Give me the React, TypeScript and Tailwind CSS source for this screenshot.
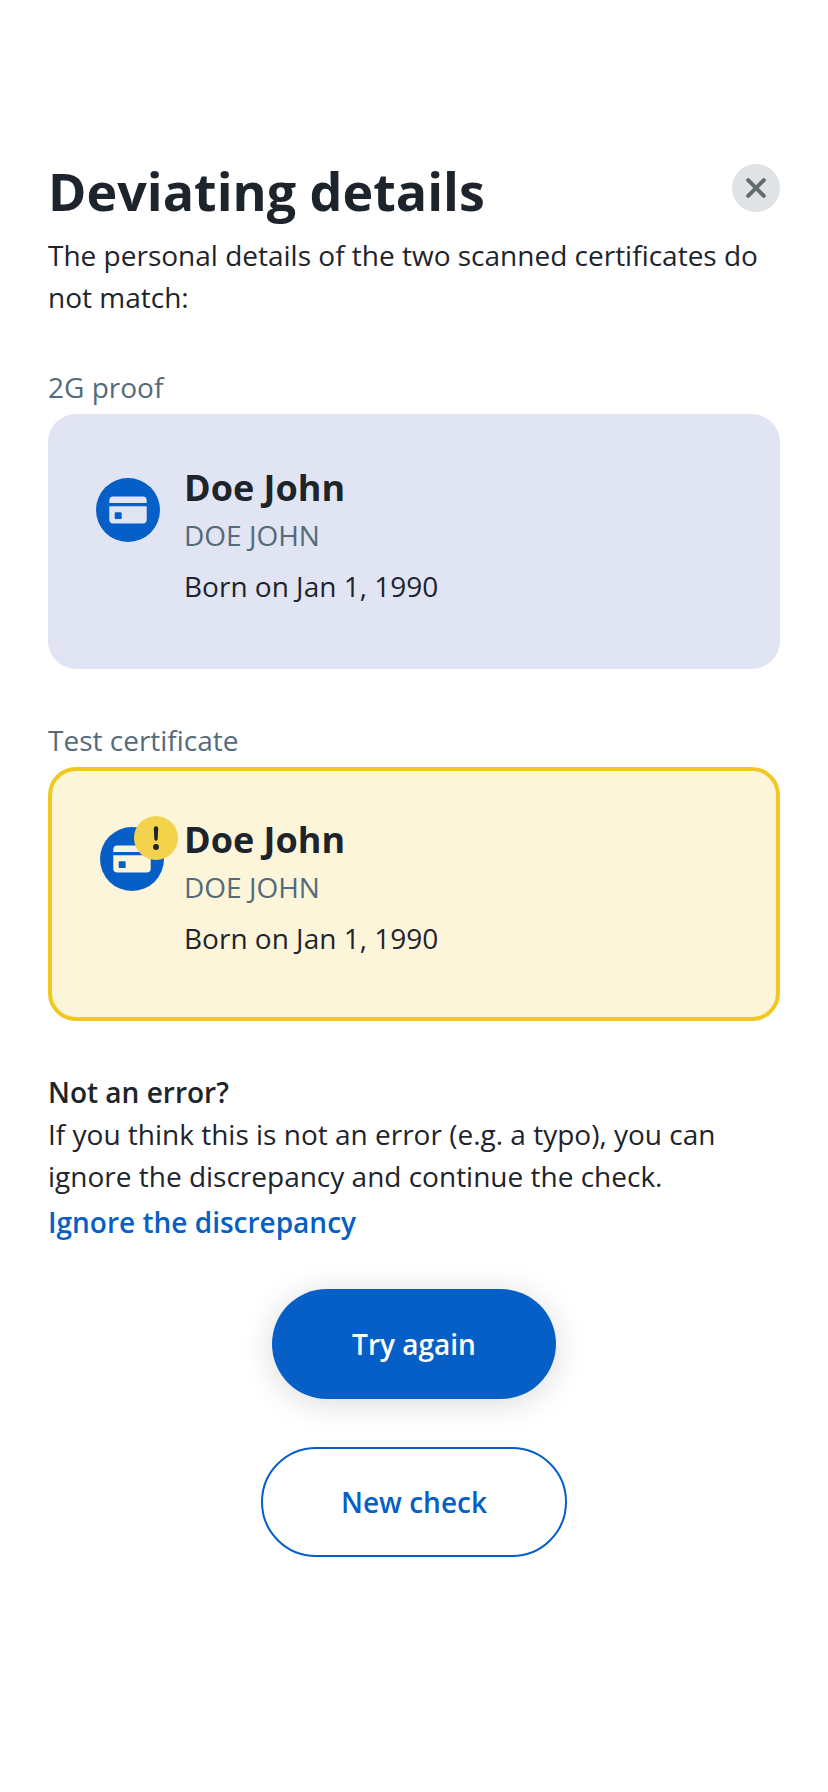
import React from 'react';

function CardIcon() {
  return (
    <svg className="size-16 shrink-0" viewBox="0 0 64 64" fill="none">
      <circle cx="32" cy="32" r="32" fill="#055fc6" />
      <path fill="currentColor" d="M13.3 25v-2.6a4 4 0 0 1 4-4h29.4a4 4 0 0 1 4 4V25zM13.3 28.3h37.4v13.3a4 4 0 0 1-4 4H17.3a4 4 0 0 1-4-4z" />
      <rect x="18.7" y="34.3" width="7" height="6.8" rx="1.2" fill="#055fc6" />
    </svg>
  );
}

function WarningBadge() {
  return (
    <svg className="absolute -top-[11px] left-[34px] size-11" viewBox="0 0 44 44">
      <circle cx="22" cy="22" r="22" fill="#f3d34c" />
      <path fill="#1d242b" d="M19.8 12.5a2.2 2.2 0 0 1 4.4 0l-.5 10.6a1.7 1.7 0 0 1-3.4 0z" />
      <circle cx="22" cy="31" r="2.9" fill="#1d242b" />
    </svg>
  );
}

function Person() {
  return (
    <div>
      <h2 className="text-[36px] font-bold leading-[50px]">Doe John</h2>
      <p className="mt-px text-[28px] leading-[42px] text-[#536b7a]">DOE JOHN</p>
      <p className="mt-[9px] text-[28px] leading-[42px]">Born on Jan 1, 1990</p>
    </div>
  );
}

export default function App() {
  return (
    <main className="min-h-[1792px] w-full bg-white px-12 pt-[159px] font-['Open_Sans',sans-serif] text-[28px] leading-[42px] text-[#1d242b]">
      <header className="flex items-start justify-between">
        <h1 className="text-[52px] font-bold leading-[64px]">Deviating details</h1>
        <button aria-label="Close" className="mt-[5px] flex size-12 items-center justify-center rounded-full bg-[#dfe3e6]">
          <svg className="size-12" viewBox="0 0 48 48" stroke="#636e6c" strokeWidth="4" strokeLinecap="round"><path d="m16.2 16.2 15.6 15.6m0-15.6L16.2 31.8" /></svg>
        </button>
      </header>
      <p className="mt-[11px]">The personal details of the two scanned certificates do not match:</p>
      <section className="mt-[48px]">
        <p className="text-[#536b7a]">2G proof</p>
        <div className="mt-[6px] flex h-[255px] gap-6 rounded-[28px] bg-[#e1e4f3] pl-12 pt-[49px]">
          <div className="mt-[15px] text-[#e1e4f3]"><CardIcon /></div>
          <Person />
        </div>
      </section>
      <section className="mt-[50px]">
        <p className="text-[#536b7a]">Test certificate</p>
        <div className="mt-[6px] flex h-[254px] gap-5 rounded-[28px] border-4 border-[#f1c81f] bg-[#fdf5da] pl-12 pt-[44px]">
          <div className="relative mt-[12px] h-16 text-[#fdf5da]">
            <CardIcon />
            <WarningBadge />
          </div>
          <Person />
        </div>
      </section>
      <section className="mt-[50px]">
        <h3 className="font-semibold">Not an error?</h3>
        <p>If you think this is not an error (e.g. a typo), you can ignore the discrepancy and continue the check.</p>
        <button className="mt-1 block font-semibold text-[#055fc6]">Ignore the discrepancy</button>
      </section>
      <div className="mt-[46px] flex flex-col items-center gap-12">
        <button className="h-[110px] w-[284px] rounded-full bg-[#055fc6] font-semibold text-white shadow-[0_4px_32px_rgba(0,0,0,0.15)]">Try again</button>
        <button className="h-[110px] w-[306px] rounded-full border-2 border-[#055fc6] font-semibold text-[#055fc6]">New check</button>
      </div>
    </main>
  );
}
